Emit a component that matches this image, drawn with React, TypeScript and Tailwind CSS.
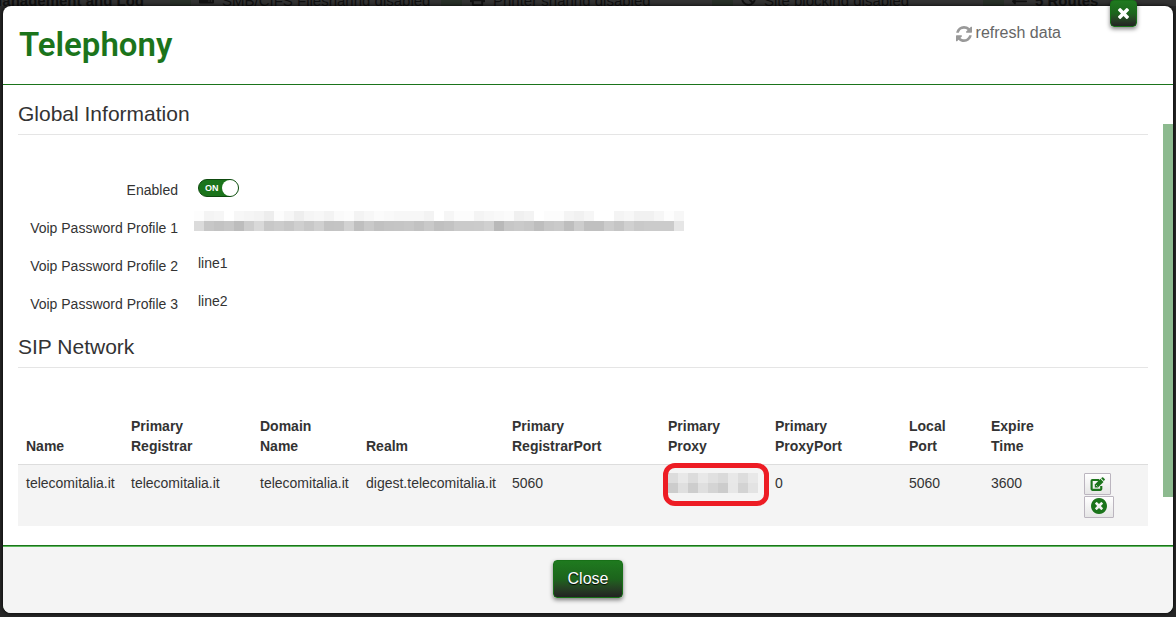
import { useState, type ReactNode } from 'react'
import { FaBan, FaExchangeAlt, FaHdd, FaPrint } from 'react-icons/fa'

const COLUMNS = [
  { label: 'Name', width: 'w-[105px]' },
  { label: 'Primary Registrar', width: 'w-[129px]' },
  { label: 'Domain Name', width: 'w-[106px]' },
  { label: 'Realm', width: 'w-[146px]' },
  { label: 'Primary RegistrarPort', width: 'w-[156px]' },
  { label: 'Primary Proxy', width: 'w-[107px]' },
  { label: 'Primary ProxyPort', width: 'w-[134px]' },
  { label: 'Local Port', width: 'w-[82px]' },
  { label: 'Expire Time', width: 'w-[93px]' },
]

// grey levels of the masked values, one hex pair per 10px cell
const PASSWORD_MASK = [
  'fd f4 f6 ff f7 f5 f3 ed fc f6 ee f5 f7 f3 fa fc f3 f7 fb f9 f7 f7 f7 f3 ff f6 fc fc f4 f7 f9 fb f0 f3 ff fc fc f4 f1 f6 ff ff f4 f7 f1 f1 f6 fd f7',
  'db c7 c3 c7 bd cd d9 c8 cc c7 cf c8 d0 c3 c4 d2 bf c9 c1 c4 c5 c7 c2 c9 c0 c3 ca ca cb d0 b9 c7 ca c7 be c7 ca be cd c0 c0 cc c5 d0 c9 cb cb cb e6',
]
const PROXY_MASK = [
  'dc e8 dc e8 e0 da e8 dd e8',
  'cc df cd df d4 cc e7 d3 e3',
]

function Mosaic({ rows, className }: { rows: string[]; className?: string }) {
  const cells = rows.map(r => r.split(' '))
  return (
    <svg
      width={cells[0].length * 10}
      height={rows.length * 10}
      shapeRendering="crispEdges"
      aria-label="hidden value"
      role="img"
      className={className}
    >
      {cells.map((row, y) =>
        row.map((c, x) => (
          <rect key={`${x}-${y}`} x={x * 10} y={y * 10} width="10" height="10" fill={`#${c}${c}${c}`} />
        ))
      )}
    </svg>
  )
}

function RefreshIcon() {
  return (
    <svg viewBox="0 0 1536 1536" className="mt-0.5 w-4 h-4 fill-[#999]">
      <path d="M1511 928q0 5-1 7-64 268-268 434.500t-478 166.500q-146 0-282.500-55t-243.500-157l-129 129q-19 19-45 19t-45-19-19-45v-448q0-26 19-45t45-19h448q26 0 45 19t19 45-19 45l-137 137q71 66 161 102t187 36q134 0 250-65t186-179q11-17 53-117 8-23 30-23h192q13 0 22.500 9.500t9.500 22.500zm25-800v448q0 26-19 45t-45 19h-448q-26 0-45-19t-19-45 19-45l138-138q-148-137-349-137-134 0-250 65t-186 179q-11 17-53 117-8 23-30 23h-199q-13 0-22.500-9.500t-9.500-22.500v-7q65-268 270-434.500t480-166.500q146 0 284 55.500t245 156.500l130-129q19-19 45-19t45 19 19 45z" />
    </svg>
  )
}

function TimesIcon() {
  return (
    <svg viewBox="302 366 1188 1188" className="w-[11px] h-[11px] fill-white">
      <path d="M1490 1322q0 40-28 68l-136 136q-28 28-68 28t-68-28l-294-294-294 294q-28 28-68 28t-68-28l-136-136q-28-28-28-68t28-68l294-294-294-294q-28-28-28-68t28-68l136-136q28-28 68-28t68 28l294 294 294-294q28-28 68-28t68 28l136 136q28 28 28 68t-28 68l-294 294 294 294q28 28 28 68z" />
    </svg>
  )
}

function EditIcon() {
  return (
    <svg viewBox="0 0 14 14" className="w-[15px] h-[15px]">
      <path d="M8.500 2.800H2.200q-.7 0-.7.7v7.800q0 .7.7.7h7.600q.7 0 .7-.7V8.500" fill="none" stroke="#1b741b" strokeWidth="2" />
      <path d="M4.500 9.900V6.900L9.700 1.700l2.900 2.900L7.400 9.900z" fill="#1b741b" />
      <path d="M10.400 1.200l.8-.8q.6-.5 1.100 0l1.400 1.400q.5.600 0 1.100l-.8.900z" fill="#1b741b" />
      <path d="M5.600 7.500l1.300 1.300" stroke="#f2f2f2" strokeWidth=".7" />
    </svg>
  )
}

function RemoveIcon() {
  return (
    <svg viewBox="128 128 1536 1536" className="mb-0.5 w-4 h-4 fill-[#1b741b]">
      <path d="M1277 1122q0-26-19-45l-181-181 181-181q19-19 19-45 0-27-19-46l-90-90q-19-19-46-19-26 0-45 19l-181 181-181-181q-19-19-45-19-27 0-46 19l-90 90q-19 19-19 46 0 26 19 45l181 181-181 181q-19 19-19 45 0 27 19 46l90 90q19 19 46 19 26 0 45-19l181-181 181 181q19 19 45 19 27 0 46-19l90-90q19-19 19-46zm387-226q0 209-103 385.500t-279.500 279.500-385.500 103-385.500-103-279.500-279.500-103-385.500 103-385.500 279.500-279.500 385.500-103 385.500 103 279.500 279.500 103 385.500z" />
    </svg>
  )
}

function StatusItem({ icon, children }: { icon: ReactNode; children: ReactNode }) {
  return (
    <div className="w-[271px] shrink-0 flex items-end">
      <span className="w-[21px] h-1.5 mr-2 bg-[#283028]" />
      <span className="w-[23px]">{icon}</span>
      <span>{children}</span>
    </div>
  )
}

function Legend({ children }: { children: ReactNode }) {
  return (
    <h3 className="border-b border-[#e5e5e5] text-[21px] leading-10 text-[#333]">{children}</h3>
  )
}

function Field({ label, children }: { label: string; children: ReactNode }) {
  return (
    <div className="flex h-[38px]">
      <dt className="w-40 pt-[5px] text-right">{label}</dt>
      <dd className="pl-5 pt-0.5">{children}</dd>
    </div>
  )
}

export default function App() {
  const [enabled, setEnabled] = useState(true)

  return (
    <div className="min-h-screen flex flex-col bg-[#272727] px-[3px] pb-1 font-['Liberation_Sans',Arial,sans-serif] text-sm text-[#333]">

      {/* ── Dimmed page behind the dialog ── */}
      <div className="h-1.5 -mx-[3px] flex items-end overflow-hidden whitespace-nowrap bg-[#333] text-[15px] leading-[10px] text-[#111]" aria-hidden="true">
        <div className="w-[170px] shrink-0 flex justify-end pr-[26px] font-bold">Management and Log</div>
        <StatusItem icon={<FaHdd />}>SMB/CIFS Filesharing disabled</StatusItem>
        <StatusItem icon={<FaPrint />}>Printer sharing disabled</StatusItem>
        <StatusItem icon={<FaBan />}>Site blocking disabled</StatusItem>
        <StatusItem icon={<FaExchangeAlt />}><b>5 Routes</b></StatusItem>
      </div>

      {/* ── Dialog ── */}
      <div role="dialog" aria-labelledby="title" className="relative flex-1 flex flex-col rounded-lg bg-white shadow-[0_0_4px_#000]">
        <button
          type="button"
          aria-label="Close dialog"
          className="absolute right-9 -top-1.5 w-[27px] h-[27px] flex items-center justify-center rounded-sm border border-[#187018] bg-gradient-to-b from-[#1f7a1f] via-[#1c641c] to-[#222] shadow-[0_2px_4px_rgba(0,0,0,0.5)]"
        >
          <TimesIcon />
        </button>

        <header className="flex justify-between border-b border-[#1b741b] pl-4 pr-28 h-[79px]">
          <h2 id="title" className="pt-4 font-['Roboto',sans-serif] text-[33px] leading-[46px] font-semibold text-[#1b741b]">Telephony</h2>
          <button type="button" className="flex items-center gap-1 self-start pt-[17px] text-base leading-5 text-[#666]">
            <RefreshIcon />
            refresh data
          </button>
        </header>

        <div className="flex-1 flex">
          <main className="flex-1 pl-[15px] pr-[15px] pt-[9px] pb-[19px]">
            <Legend>Global Information</Legend>
            <dl className="pt-10 leading-5">
              <Field label="Enabled">
                <label className="mt-0.5 w-[41px] h-[18px] flex items-center justify-between rounded-full border border-[#0f4a0f] bg-[#1b741b] pl-1.5 text-[9px] font-bold text-white">
                  ON
                  <input
                    type="checkbox"
                    aria-label="Enabled"
                    checked={enabled}
                    onChange={e => setEnabled(e.target.checked)}
                    className="appearance-none w-4 h-4 rounded-full bg-white"
                  />
                </label>
              </Field>
              <Field label="Voip Password Profile 1"><Mosaic rows={PASSWORD_MASK} className="-ml-1 -mt-1" /></Field>
              <Field label="Voip Password Profile 2">line1</Field>
              <Field label="Voip Password Profile 3">line2</Field>
            </dl>

            <Legend>SIP Network</Legend>
            <table className="mt-10 w-full table-fixed text-left leading-5">
              <thead>
                <tr className="align-bottom">
                  {COLUMNS.map(c => (
                    <th key={c.label} className={`${c.width} p-2 font-bold`}>
                      {c.label.split(' ').map(word => <span key={word} className="block">{word}</span>)}
                    </th>
                  ))}
                  <th className="w-[72px] p-2" aria-label="Actions" />
                </tr>
              </thead>
              <tbody>
                <tr className="border-t border-[#ddd] bg-[#f4f4f4] align-top">
                  <td className="p-2">telecomitalia.it</td>
                  <td className="p-2">telecomitalia.it</td>
                  <td className="p-2">telecomitalia.it</td>
                  <td className="p-2 whitespace-nowrap">digest.telecomitalia.it</td>
                  <td className="p-2">5060</td>
                  <td className="relative p-2">
                    <Mosaic rows={PROXY_MASK} />
                    <span className="absolute left-[3px] -top-0.5 w-[106px] h-[43px] rounded-xl border-[5px] border-[#ed1c24]" />
                  </td>
                  <td className="p-2">0</td>
                  <td className="p-2">5060</td>
                  <td className="p-2">3600</td>
                  <td className="p-2">
                    <div className="flex flex-col items-start gap-px">
                      <button type="button" aria-label="Edit" className="w-[27px] h-[22px] flex items-center justify-center rounded-[1px] border border-[#bbb5bf] bg-gradient-to-b from-white to-[#e6e6e6]">
                        <EditIcon />
                      </button>
                      <button type="button" aria-label="Remove" className="w-[30px] h-[22px] flex items-center justify-center rounded-[1px] border border-[#bbb5bf] bg-gradient-to-b from-white to-[#e6e6e6]">
                        <RemoveIcon />
                      </button>
                    </div>
                  </td>
                </tr>
              </tbody>
            </table>
          </main>

          {/* scroll rail */}
          <div className="w-2.5 flex pt-[39px] pb-12">
            <div className="flex-1 bg-[#8dba8f]" />
          </div>
        </div>

        <footer className="flex justify-center rounded-b-lg border-t border-[#1b741b] bg-[#f4f4f4] pt-3.5 pb-[15px] shadow-[inset_0_1px_0_#5cb85c]">
          <button
            type="button"
            className="w-[70px] h-[38px] rounded-sm border border-[#187018] bg-gradient-to-b from-[#1f7a1f] via-[#1c641c] to-[#222] text-base text-white [text-shadow:0_1px_1px_#000] shadow-[0_2px_4px_rgba(0,0,0,0.5)]"
          >
            Close
          </button>
        </footer>
      </div>
    </div>
  )
}
